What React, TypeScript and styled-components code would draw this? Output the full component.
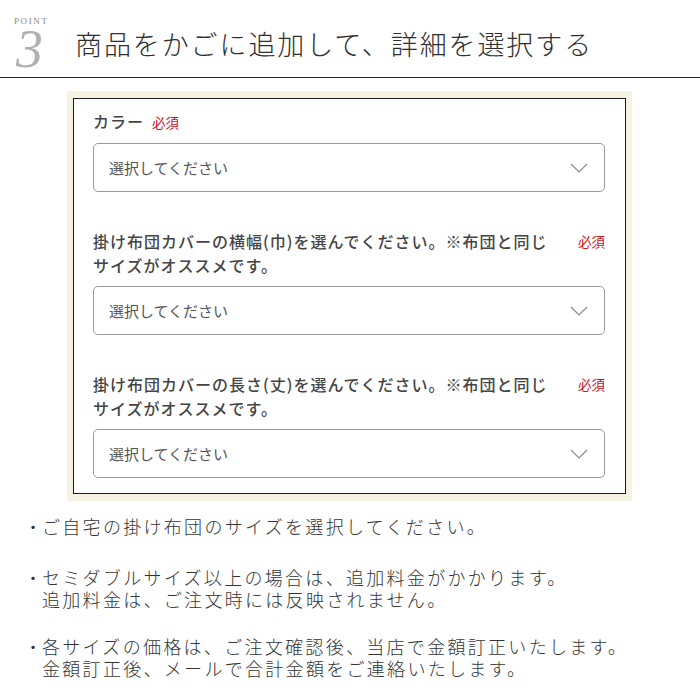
import React from 'react';
import styled, { createGlobalStyle } from 'styled-components';

const GlobalStyle = createGlobalStyle`
  html, body {
    margin: 0;
    padding: 0;
    background: #fff;
  }
  body {
    font-family: "Noto Sans CJK JP", "Noto Sans", sans-serif;
  }
`;

const Page = styled.div`
  width: 700px;
  height: 700px;
  overflow: hidden;
  background: #fff;
`;

const Header = styled.header`
  display: flex;
  align-items: flex-start;
  height: 78px;
  border-bottom: 1.5px solid #2a2a2a;
  box-sizing: border-box;
  padding: 16px 0 0 14px;
`;

const PointMark = styled.div`
  display: flex;
  flex-direction: column;
  width: 61px;
`;

const PointLabel = styled.span`
  font-family: "Liberation Serif", serif;
  font-size: 9px;
  letter-spacing: 1.6px;
  color: #8a8a8a;
  line-height: 10px;
`;

const PointNumber = styled.span`
  font-family: "Liberation Serif", serif;
  font-style: italic;
  font-size: 54px;
  line-height: 46px;
  color: #b0b0b0;
  margin-left: 2px;
`;

const Title = styled.h1`
  margin: 10px 0 0 0;
  font-family: "Noto Sans CJK JP", sans-serif;
  font-weight: 300;
  font-size: 27px;
  letter-spacing: 1.9px;
  line-height: 36px;
  color: #2e2e2e;
`;

const FrameWrap = styled.div`
  padding: 13px 68px 0 67px;
`;

const Frame = styled.div`
  background: #f5f2e2;
  padding: 7px 6px;
`;

const Form = styled.div`
  background: #fff;
  border: 1px solid #1a1a1a;
  padding: 10px 20px 15px 19px;
  display: flex;
  flex-direction: column;
`;

const Field = styled.div<{ $first?: boolean }>`
  display: flex;
  flex-direction: column;
  margin-top: ${p => (p.$first ? '0' : '37px')};
`;

const LabelRow = styled.div<{ $inline?: boolean }>`
  display: flex;
  align-items: ${p => (p.$inline ? 'baseline' : 'flex-start')};
  justify-content: ${p => (p.$inline ? 'flex-start' : 'space-between')};
  gap: 8px;
  margin-bottom: 9px;
`;

const Label = styled.div`
  font-size: 16px;
  font-weight: 500;
  letter-spacing: 1px;
  line-height: 24px;
  color: #444;
`;

const Required = styled.span`
  font-size: 13.5px;
  color: #d0121b;
  line-height: 24px;
  white-space: nowrap;
`;

const Select = styled.div`
  height: 49px;
  box-sizing: border-box;
  border: 1px solid #9a9a9a;
  border-radius: 5px;
  display: flex;
  align-items: center;
  justify-content: space-between;
  padding: 0 16px 0 15px;
  font-size: 15px;
  color: #555;
`;

const Chevron = () => (
  <svg width="18" height="10" viewBox="0 0 18 10" fill="none">
    <path d="M1 1 L9 9 L17 1" stroke="#8a8a8a" strokeWidth="1.2" />
  </svg>
);

const Notes = styled.ul`
  list-style: none;
  margin: 14px 0 0 0;
  padding: 0 0 0 24px;
  display: flex;
  flex-direction: column;
`;

const Note = styled.li<{ $gap?: number }>`
  display: flex;
  margin-top: ${p => p.$gap ?? 0}px;
  font-family: "Noto Sans CJK JP", sans-serif;
  font-weight: 300;
  font-size: 18px;
  line-height: 22px;
  letter-spacing: 2.3px;
  color: #333;
`;

const Bullet = styled.span`
  width: 18px;
  flex-shrink: 0;
  letter-spacing: 0;
`;

const NoteBody = styled.span`
  display: flex;
  flex-direction: column;
`;

const fields = [
  { lines: ['カラー'], inline: true },
  { lines: ['掛け布団カバーの横幅(巾)を選んでください。※布団と同じ', 'サイズがオススメです。'], inline: false },
  { lines: ['掛け布団カバーの長さ(丈)を選んでください。※布団と同じ', 'サイズがオススメです。'], inline: false },
];

const notes = [
  { gap: 0, lines: ['ご自宅の掛け布団のサイズを選択してください。'] },
  { gap: 29, lines: ['セミダブルサイズ以上の場合は、追加料金がかかります。', '追加料金は、ご注文時には反映されません。'] },
  { gap: 25, lines: ['各サイズの価格は、ご注文確認後、当店で金額訂正いたします。', '金額訂正後、メールで合計金額をご連絡いたします。'] },
];

export default function App() {
  return (
    <Page>
      <GlobalStyle />
      <Header>
        <PointMark>
          <PointLabel>POINT</PointLabel>
          <PointNumber>3</PointNumber>
        </PointMark>
        <Title>商品をかごに追加して、詳細を選択する</Title>
      </Header>
      <FrameWrap>
        <Frame>
          <Form>
            {fields.map((f, i) => (
              <Field key={i} $first={i === 0}>
                <LabelRow $inline={f.inline}>
                  <Label>
                    {f.lines.map((l, j) => (
                      <div key={j}>{l}</div>
                    ))}
                  </Label>
                  <Required>必須</Required>
                </LabelRow>
                <Select>
                  <span>選択してください</span>
                  <Chevron />
                </Select>
              </Field>
            ))}
          </Form>
        </Frame>
      </FrameWrap>
      <Notes>
        {notes.map((n, i) => (
          <Note key={i} $gap={n.gap}>
            <Bullet>・</Bullet>
            <NoteBody>
              {n.lines.map((l, j) => (
                <span key={j}>{l}</span>
              ))}
            </NoteBody>
          </Note>
        ))}
      </Notes>
    </Page>
  );
}
